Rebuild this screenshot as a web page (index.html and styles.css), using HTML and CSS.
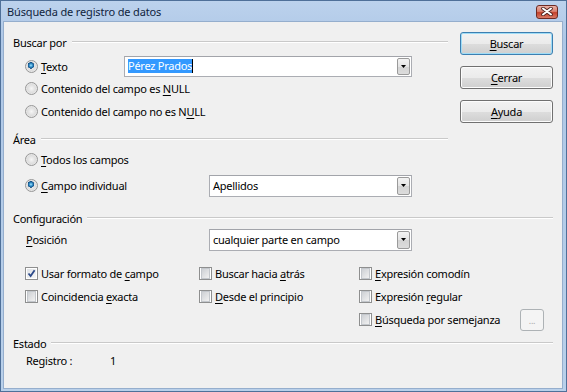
FILE: index.html
```html
<!DOCTYPE html>
<html lang="es">
<head>
  <meta charset="UTF-8" />
  <title>Búsqueda de registro de datos</title>
  <link rel="stylesheet" href="styles.css">
</head>
<body>

  <div class="window">
    <div class="titlebar">
      <span class="title">Búsqueda de registro de datos</span>
      <span class="close">
        <svg width="12" height="9" viewBox="0 0 12 9">
          <path d="M2 1.5L10 7.5M10 1.5L2 7.5" stroke="#4b211c" stroke-width="3.6" stroke-linecap="round"/>
          <path d="M2 1.5L10 7.5M10 1.5L2 7.5" stroke="#fff" stroke-width="2" stroke-linecap="round"/>
        </svg>
      </span>
    </div>

    <div class="client">
      <div class="top">
        <div class="main">
          <section class="group search">
            <div class="group-head"><span>Buscar por</span></div>
            <div class="row first">
              <span class="opt w-short"><span class="radio checked"></span><span><u>T</u>exto</span></span>
              <div class="combo text-combo">
                <span class="combo-text"><span class="sel">Pérez Prados</span><span class="caret"></span></span>
                <span class="combo-btn"><svg width="5" height="3" viewBox="0 0 5 3"><path d="M0 0h5L2.5 3z" fill="#000"/></svg></span>
              </div>
            </div>
            <div class="row">
              <span class="opt"><span class="radio"></span><span>Contenido del campo es <u>N</u>ULL</span></span>
            </div>
            <div class="row">
              <span class="opt"><span class="radio"></span><span>Contenido del campo no es N<u>U</u>LL</span></span>
            </div>
          </section>

          <section class="group area">
            <div class="group-head"><span>Área</span></div>
            <div class="row todos">
              <span class="opt"><span class="radio"></span><span><u>T</u>odos los campos</span></span>
            </div>
            <div class="row campo">
              <span class="opt w-long"><span class="radio checked"></span><span><u>C</u>ampo individual</span></span>
              <div class="combo select-combo">
                <span class="combo-text">Apellidos</span>
                <span class="combo-btn"><svg width="5" height="3" viewBox="0 0 5 3"><path d="M0 0h5L2.5 3z" fill="#000"/></svg></span>
              </div>
            </div>
          </section>
        </div>

        <div class="buttons">
          <button class="btn default"><u>B</u>uscar</button>
          <button class="btn"><u>C</u>errar</button>
          <button class="btn"><u>A</u>yuda</button>
        </div>
      </div>

      <section class="group config">
        <div class="group-head"><span>Configuración</span></div>
        <div class="row position">
          <span class="opt w-long plain"><span><u>P</u>osición</span></span>
          <div class="combo select-combo">
            <span class="combo-text">cualquier parte en campo</span>
            <span class="combo-btn"><svg width="5" height="3" viewBox="0 0 5 3"><path d="M0 0h5L2.5 3z" fill="#000"/></svg></span>
          </div>
        </div>
        <div class="checks">
          <span class="opt"><span class="check checked"><svg width="9" height="9" viewBox="0 0 9 9"><path d="M1.5 4.5L3.6 7L7.6 1.2" fill="none" stroke="#2c4a8a" stroke-width="1.8"/></svg></span><span>Usar formato de <u>c</u>ampo</span></span>
          <span class="opt"><span class="check"></span><span>Buscar hacia <u>a</u>trás</span></span>
          <span class="opt"><span class="check"></span><span><u>E</u>xpresión comodín</span></span>
          <span></span>

          <span class="opt"><span class="check"></span><span>Coincidencia <u>e</u>xacta</span></span>
          <span class="opt"><span class="check"></span><span><u>D</u>esde el principio</span></span>
          <span class="opt"><span class="check"></span><span>Expresión <u>r</u>egular</span></span>
          <span></span>

          <span></span>
          <span></span>
          <span class="opt"><span class="check"></span><span><u>B</u>úsqueda por semejanza</span></span>
          <span class="dots-cell"><button class="btn small" disabled>...</button></span>
        </div>
      </section>

      <section class="group status">
        <div class="group-head"><span>Estado</span></div>
        <div class="row record">
          <span class="record-label">Registro :</span>
          <span>1</span>
        </div>
      </section>
    </div>
  </div>

</body>
</html>
```

FILE: styles.css
```css
* {
  box-sizing: border-box;
}

body {
  margin: 0;
  font-family: "Segoe UI", "Noto Sans", sans-serif;
  font-size: 11px;
  letter-spacing: -0.25px;
  color: #000;
}

.window {
  width: 567px;
  height: 392px;
  border: 1px solid #4f7099;
  background: linear-gradient(#bcd2ed, #aec7e6 40px, #b9d0ea);
  display: flex;
  flex-direction: column;
}

.titlebar {
  height: 21px;
  display: flex;
  align-items: center;
  justify-content: space-between;
  padding: 0 8px 0 6px;
}

.title {
  font-size: 11px;
  letter-spacing: -0.15px;
  color: #10243d;
}

.close {
  width: 22px;
  height: 14px;
  border: 1px solid #6e2a22;
  border-radius: 3px;
  background: linear-gradient(#eab1a6, #d9806f 45%, #c5412b 55%, #d87a66);
  display: flex;
  align-items: center;
  justify-content: center;
}

.close svg {
  display: block;
}

.client {
  flex: 1;
  margin: 0 4px 3px 3px;
  padding: 0 9px;
  background: #f0f0f0;
  box-shadow: 0 0 0 1px #95aecd;
}

u {
  text-decoration: underline;
  text-underline-offset: 2px;
}

/* layout */

.top {
  display: flex;
  gap: 12px;
}

.main {
  width: 435px;
}

.buttons {
  width: 93px;
  padding-top: 10px;
  display: flex;
  flex-direction: column;
  gap: 11px;
}

.group-head {
  height: 16px;
  display: flex;
  align-items: center;
  gap: 5px;
}

.group-head::after {
  content: "";
  flex: 1;
  border-top: 1px solid #c9c9c9;
  border-bottom: 1px solid #fff;
}

.search { margin-top: 12px; }
.area { margin-top: 8px; }
.config { margin-top: 13px; }
.status { margin-top: 4px; }

.row {
  height: 23px;
  display: flex;
  align-items: center;
  padding-left: 12px;
}

.row.first {
  margin-top: 5px;
  height: 22px;
}

.row.todos {
  margin-top: 1px;
  height: 22px;
}

.row.campo {
  margin-top: 4px;
}

.row.position {
  margin-top: 2px;
}

.opt {
  display: flex;
  align-items: center;
  white-space: nowrap;
}

.opt.w-short { width: 99px; }
.opt.w-long { width: 184px; }
.opt.plain { padding-left: 1px; }

/* radio and check boxes */

.radio {
  width: 13px;
  height: 13px;
  margin-right: 3px;
  flex: none;
  border-radius: 50%;
  border: 1px solid #979797;
  background: radial-gradient(circle at 50% 50%, #f6f6f6 0, #dedede 4px, #ececec 6px);
}

.radio.checked {
  background:
    radial-gradient(circle at 45% 40%, #b5e6fb 0, #4aa8dc 1.2px, #1f6aa3 2.4px, #164f82 3.1px, transparent 3.4px),
    radial-gradient(circle at 50% 50%, #f6f6f6 0, #dedede 4px, #ececec 6px);
}

.check {
  width: 13px;
  height: 13px;
  margin-right: 3px;
  flex: none;
  border: 1px solid #8e8f8f;
  background: #fff;
  padding: 1px;
  display: flex;
  align-items: center;
  justify-content: center;
}

.check::before {
  content: "";
  display: block;
  width: 9px;
  height: 9px;
  background: linear-gradient(135deg, #cdd0d4, #f1f1f1);
  border: 1px solid #c3c7cc;
}

.check.checked::before {
  display: none;
}

.check svg {
  display: block;
  background: linear-gradient(135deg, #dfe2e6, #f6f6f6);
}

.checks {
  display: grid;
  grid-template-columns: 174px 160px 160px 1fr;
  grid-auto-rows: 23px;
  align-items: center;
  margin-top: 11px;
  padding-left: 12px;
}

/* combo boxes */

.combo {
  height: 21px;
  display: flex;
  align-items: center;
  background: #fff;
  border: 1px solid #abadb3;
  border-top-color: #a2a4aa;
  padding-right: 1px;
}

.text-combo { width: 288px; }
.select-combo { width: 203px; height: 22px; }

.combo-text {
  flex: 1;
  padding-left: 3px;
  display: flex;
  align-items: center;
  white-space: nowrap;
}

.sel {
  background: #3399ff;
  color: #fff;
  line-height: 14px;
}

.caret {
  width: 1px;
  height: 14px;
  background: #000;
}

.combo-btn {
  width: 13px;
  height: calc(100% - 2px);
  border: 1px solid #9a9a9a;
  border-radius: 2px;
  background: linear-gradient(#f3f3f3, #e4e4e4 50%, #d3d3d3 51%, #dcdcdc);
  display: flex;
  align-items: center;
  justify-content: center;
}

.combo-btn svg {
  display: block;
}

/* buttons */

.btn {
  height: 23px;
  font: inherit;
  letter-spacing: inherit;
  color: #000;
  border: 1px solid #707070;
  border-radius: 3px;
  background: linear-gradient(#f2f2f2, #ebebeb 50%, #dddddd 51%, #cfcfcf);
  box-shadow: inset 0 0 0 1px #fcfcfc;
  padding: 0;
}

.btn.default {
  border-color: #3c7fb1;
  box-shadow: inset 0 0 0 1px #9fdcf6;
}

.btn.small {
  width: 24px;
  height: 22px;
  color: #a8a8a8;
  border-color: #adb2b5;
  background: #f4f4f4;
  box-shadow: none;
  font-size: 9px;
  padding-top: 2px;
}

.dots-cell {
  padding-left: 1px;
}

/* status */

.row.record {
  height: 18px;
  padding-left: 13px;
}

.record-label {
  width: 84px;
}
```
